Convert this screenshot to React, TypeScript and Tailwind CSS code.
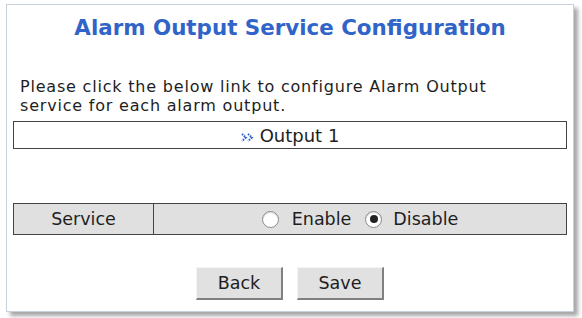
import React from 'react';

const font = { fontFamily: '"DejaVu Sans", Verdana, sans-serif' };

function Radio({ checked }: { checked?: boolean }) {
  return (
    <span className="inline-flex items-center justify-center w-[17px] h-[17px] rounded-full border border-[#8a8a8a] bg-white shadow-[inset_0_1px_1px_rgba(0,0,0,0.15)]">
      {checked && <span className="w-[8px] h-[8px] rounded-full bg-[#222]" />}
    </span>
  );
}

function Chevrons() {
  return (
    <svg width="13" height="9" viewBox="0 0 13 9" className="mt-[5px]">
      <path d="M1 1 L5 4.5 L1 8 M7 1 L11 4.5 L7 8" fill="none" stroke="#2f62c8" strokeWidth="2" strokeDasharray="1.6 1" />
    </svg>
  );
}

export default function App() {
  return (
    <div className="w-[582px] h-[318px] bg-white pt-[4px] pl-[6px]" style={font}>
      <div className="w-[568px] h-[308px] bg-white border border-[#c8d0dc] shadow-[4px_4px_4px_rgba(0,0,0,0.35)] px-[6px] flex flex-col text-[#1e1e1e]">
        <h1 className="mt-[10px] text-center text-[21.4px] leading-[26px] font-bold text-[#3164c8]">
          Alarm Output Service Configuration
        </h1>
        <p className="mt-[36px] pl-[7px] text-[16px] leading-[19px] tracking-[0.8px]">
          Please click the below link to configure Alarm Output<br />
          service for each alarm output.
        </p>
        <div className="mt-[6px] h-[28px] border border-[#444] flex items-center justify-center gap-[6px] text-[18px]">
          <Chevrons />
          <span>Output 1</span>
        </div>
        <div className="mt-[54px] h-[32px] border border-[#444] bg-[#e0e0e0] flex text-[17.5px]">
          <div className="w-[140px] border-r border-[#444] flex items-center justify-center">Service</div>
          <div className="flex-1 flex items-center justify-center">
            <Radio />
            <span className="ml-[13px] mr-[14px]">Enable</span>
            <Radio checked />
            <span className="ml-[11px]">Disable</span>
          </div>
        </div>
        <div className="mt-[32px] flex justify-center gap-[14px]">
          <button className="w-[87px] h-[33px] bg-[#e1e1e1] border border-[#f4f4f4] border-r-2 border-b-2 border-r-[#808080] border-b-[#808080] text-[17.5px]">Back</button>
          <button className="w-[87px] h-[33px] bg-[#e1e1e1] border border-[#f4f4f4] border-r-2 border-b-2 border-r-[#808080] border-b-[#808080] text-[17.5px]">Save</button>
        </div>
      </div>
    </div>
  );
}
